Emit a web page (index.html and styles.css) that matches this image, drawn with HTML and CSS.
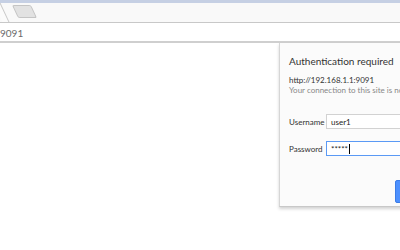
FILE: index.html
```html
<!DOCTYPE html>
<html lang="en">
<head>
  <meta charset="UTF-8">
  <title>Authentication required</title>
  <link rel="stylesheet" href="styles.css">
</head>
<body>
  <!-- browser chrome -->
  <div class="tabstrip">
    <div class="tab-active"></div>
    <div class="tab-new"></div>
  </div>
  <div class="toolbar">
    <div class="omnibox">9091</div>
  </div>

  <!-- page area with the auth popup -->
  <div class="page">
    <div class="auth-dialog">
      <div class="auth-title">Authentication required</div>
      <div class="auth-host">http://192.168.1.1:9091</div>
      <div class="auth-note">Your connection to this site is not private</div>

      <div class="auth-form">
        <label class="auth-label">Username</label>
        <div class="auth-input">user1</div>
        <label class="auth-label">Password</label>
        <div class="auth-input focused">*****<span class="caret"></span></div>
      </div>

      <div class="auth-actions">
        <button class="btn-primary">Log In</button>
      </div>
    </div>
  </div>
</body>
</html>
```

FILE: styles.css
```css
html, body {
  margin: 0;
  padding: 0;
  width: 400px;
  height: 250px;
  overflow: hidden;
  background: #fff;
  font-family: Lato, "Open Sans", sans-serif;
}

/* tab strip */
.tabstrip {
  height: 19px;
  border-top: 3px solid #c6d0e4;
  background: #f9f9f9;
  border-bottom: 1px solid #c8c8c8;
  display: flex;
  align-items: flex-end;
}
.tab-active {
  width: 6px;
  height: 19px;
  background: #fbfbfb;
  border-right: 1px solid #c8c8c8;
  transform: skewX(25deg);
  margin-left: -2px;
}
.tab-new {
  width: 17px;
  height: 11px;
  margin: 0 0 4px 10px;
  background: #e2e2e2;
  border: 1px solid #c4c4c4;
  border-radius: 2px;
  transform: skewX(25deg);
}

/* toolbar */
.toolbar {
  height: 18px;
  background: #fff;
  border-bottom: 2px solid #cfcfcf;
  display: flex;
  align-items: center;
}
.omnibox {
  font-size: 10px;
  color: #6b6b6b;
  padding-top: 2px;
}

/* page */
.page {
  position: relative;
  height: 207px;
  background: #fff;
}
.auth-dialog {
  position: absolute;
  top: 0;
  left: 279px;
  width: 260px;
  height: 164px;
  box-sizing: border-box;
  padding: 11px 0 0 9px;
  background: #fbfbfb;
  border-left: 1px solid #d6d6d6;
  border-bottom: 1px solid #c8c8c8;
  box-shadow: 0 2px 3px rgba(0, 0, 0, 0.18);
}
.auth-title {
  font-size: 10px;
  color: #333;
  line-height: 14px;
  margin-bottom: 7px;
}
.auth-host {
  font-size: 8px;
  color: #333;
  line-height: 10px;
}
.auth-note {
  font-size: 8px;
  color: #888;
  line-height: 10px;
  white-space: nowrap;
}

.auth-form {
  display: grid;
  grid-template-columns: 31px 160px;
  column-gap: 6px;
  row-gap: 12px;
  align-items: center;
  margin-top: 19px;
}
.auth-label {
  font-size: 8px;
  color: #333;
  text-align: right;
  white-space: nowrap;
}
.auth-input {
  height: 15px;
  box-sizing: border-box;
  border: 1px solid #d2d2d2;
  background: #fff;
  font-size: 8px;
  color: #222;
  padding: 1px 0 0 4px;
  line-height: 12px;
  display: flex;
}
.auth-input.focused {
  border-color: #5b9af5;
}
.caret {
  width: 1px;
  height: 10px;
  margin: 1px 0 0 1px;
  background: #000;
}

.auth-actions {
  margin-top: 22px;
  padding-left: 106px;
}
.btn-primary {
  width: 60px;
  height: 23px;
  border: 1px solid #3b7ce6;
  border-radius: 2px;
  background: #4d90fe;
  color: #fff;
  font-size: 8px;
  font-family: inherit;
  padding: 0;
}
```
